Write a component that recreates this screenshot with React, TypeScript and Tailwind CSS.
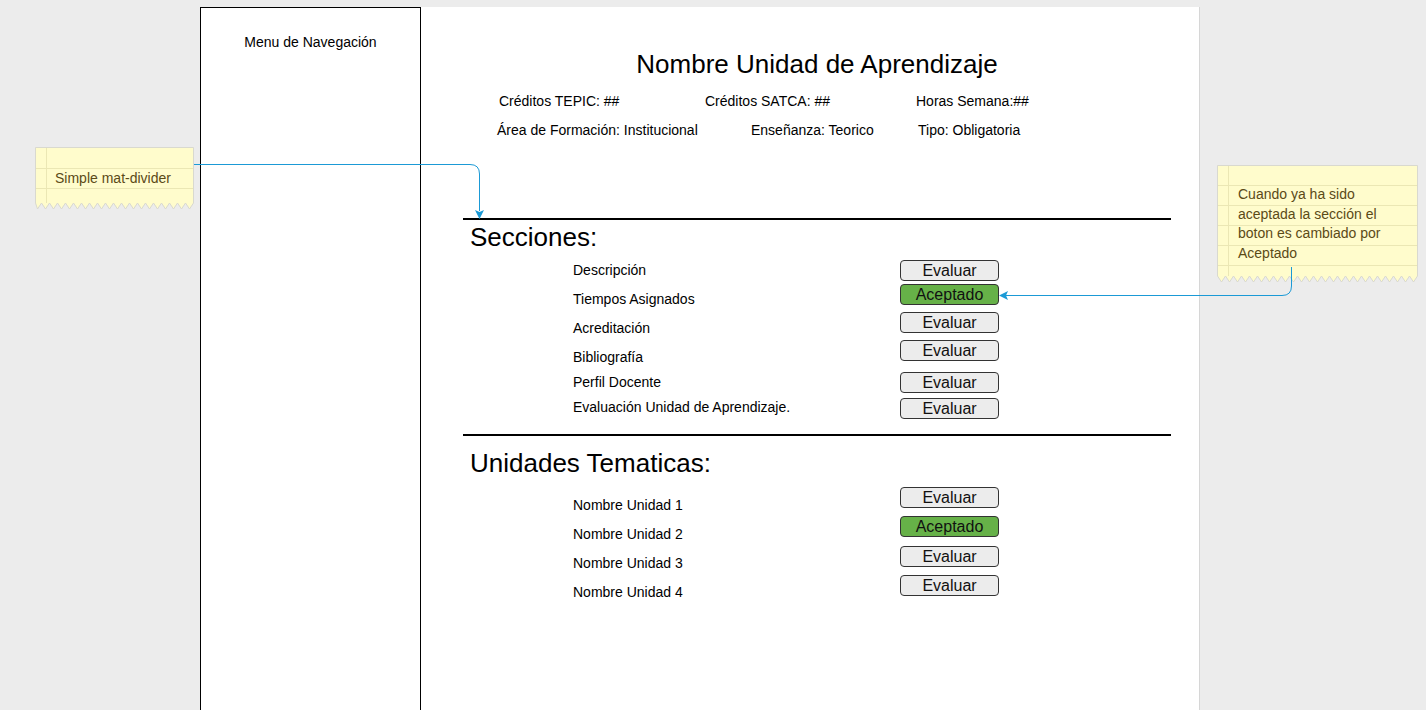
import React from 'react';

type Row = { label: string; accepted?: boolean; labelGap: string; btnGap: string };

const secciones: Row[] = [
    { label: 'Descripción', labelGap: 'mt-[11px]', btnGap: 'mt-[9px]' },
    { label: 'Tiempos Asignados', accepted: true, labelGap: 'mt-[13px]', btnGap: 'mt-[3px]' },
    { label: 'Acreditación', labelGap: 'mt-[13px]', btnGap: 'mt-[7px]' },
    { label: 'Bibliografía', labelGap: 'mt-[13px]', btnGap: 'mt-[7px]' },
    { label: 'Perfil Docente', labelGap: 'mt-[9px]', btnGap: 'mt-[11px]' },
    { label: 'Evaluación Unidad de Aprendizaje.', labelGap: 'mt-[9px]', btnGap: 'mt-[5px]' },
];

const unidades: Row[] = [
    { label: 'Nombre Unidad 1', labelGap: 'mt-[20px]', btnGap: 'mt-[10px]' },
    { label: 'Nombre Unidad 2', accepted: true, labelGap: 'mt-[13px]', btnGap: 'mt-[8px]' },
    { label: 'Nombre Unidad 3', labelGap: 'mt-[13px]', btnGap: 'mt-[9px]' },
    { label: 'Nombre Unidad 4', labelGap: 'mt-[13px]', btnGap: 'mt-[8px]' },
];

// zigzag-bottom sticky note shape (draw.io "note" style)
const NoteShape = ({ w, h, lines }: { w: number; h: number; lines: number[] }) => {
    const base = h - 7;
    let d = `M0.5 0.5 H${w - 0.5} V${base}`;
    let up = true;
    for (let x = w - 0.5; x > 0.5; x -= 4) {
        const nx = Math.max(0.5, x - 4);
        d += ` L${nx} ${up ? h - 1 : base}`;
        up = !up;
    }
    d += ' Z';
    return (
        <svg className="absolute inset-0" width={w} height={h}>
            <path d={d} fill="#fffccc" stroke="#d9d9cf" strokeWidth={1} />
            {lines.map((y) => (
                <line key={y} x1={1} x2={w - 1} y1={y + 0.5} y2={y + 0.5} stroke="#ebe7b4" strokeWidth={1} />
            ))}
            <line x1={11.5} x2={11.5} y1={1} y2={base} stroke="#ebe7b4" strokeWidth={1} />
        </svg>
    );
};

const Btn = ({ accepted, className }: { accepted?: boolean; className: string }) => (
    <div
        className={`h-[21px] w-[99px] rounded-[4px] border border-[#333] text-center text-[16px] leading-[19px] text-[#111] ${
            accepted ? 'bg-[#66b148]' : 'bg-[#ececec]'
        } ${className}`}
    >
        {accepted ? 'Aceptado' : 'Evaluar'}
    </div>
);

const List = ({ rows }: { rows: Row[] }) => (
    <div className="flex items-start pl-[110px]">
        <div className="flex w-[327px] flex-col">
            {rows.map((r) => (
                <div key={r.label} className={`h-[16px] text-[14px] leading-[16px] text-black ${r.labelGap}`}>
                    {r.label}
                </div>
            ))}
        </div>
        <div className="flex flex-col">
            {rows.map((r) => (
                <Btn key={r.label} accepted={r.accepted} className={r.btnGap} />
            ))}
        </div>
    </div>
);

export default function App() {
    return (
        <div
            className="relative h-[710px] w-[1426px] overflow-hidden bg-[#ececec]"
            style={{ fontFamily: '"Liberation Sans", Arial, sans-serif' }}
        >
            {/* page */}
            <div className="ml-[200px] pt-[7px]">
                <div className="flex h-[703px] w-[1000px] border-r border-[#d6d6d6] bg-white">
                    <div className="h-[710px] w-[221px] border border-b-0 border-black pt-[26px] text-center text-[14px] leading-[16px] text-black">
                        Menu de Navegación
                    </div>

                    <div className="flex-1 pt-[43px]">
                        <div className="ml-[42px] w-[708px]">
                            <h1 className="text-center text-[26px] leading-[28px] text-black">
                                Nombre Unidad de Aprendizaje
                            </h1>
                            <div className="mt-[15px] flex h-[16px] pl-[36px] text-[14px] leading-[16px] text-black">
                                <span className="w-[206px]">Créditos TEPIC: ##</span>
                                <span className="w-[211px]">Créditos SATCA: ##</span>
                                <span>Horas Semana:##</span>
                            </div>
                            <div className="mt-[13px] flex h-[16px] pl-[34px] text-[14px] leading-[16px] text-black">
                                <span className="w-[254px]">Área de Formación: Institucional</span>
                                <span className="w-[167px]">Enseñanza: Teorico</span>
                                <span>Tipo: Obligatoria</span>
                            </div>

                            <div className="mt-[80px] h-[2px] bg-black" />
                            <h2 className="mt-[3px] pl-[7px] text-[26px] leading-[28px] text-black">Secciones:</h2>
                            <List rows={secciones} />

                            <div className="mt-[15px] h-[2px] bg-black" />
                            <h2 className="mt-[13px] pl-[7px] text-[26px] leading-[28px] text-black">
                                Unidades Tematicas:
                            </h2>
                            <List rows={unidades} />
                        </div>
                    </div>
                </div>
            </div>

            {/* annotation notes on the canvas */}
            <div className="absolute left-[35px] top-[147px] h-[63px] w-[159px]">
                <NoteShape w={159} h={63} lines={[21, 41]} />
                <div className="relative pl-[20px] pt-[23px] text-[14px] leading-[16px] text-[#5b4a17]">
                    Simple mat-divider
                </div>
            </div>

            <div className="absolute left-[1217px] top-[165px] h-[118px] w-[201px]">
                <NoteShape w={201} h={118} lines={[20, 40, 60, 80, 100]} />
                <div className="relative pl-[21px] pt-[20px] text-[14px] leading-[19.7px] text-[#5b4a17]">
                    Cuando ya ha sido
                    <br />
                    aceptada la sección el
                    <br />
                    boton es cambiado por
                    <br />
                    Aceptado
                </div>
            </div>

            {/* connectors */}
            <svg className="pointer-events-none absolute left-0 top-0" width={1426} height={710}>
                <path d="M194 164.5 H470 Q479.5 164.5 479.5 174 V211" fill="none" stroke="#1b9ad6" strokeWidth={1} />
                <polygon points="479.5,219 475,210 479.5,212 484,210" fill="#1b9ad6" />
                <path d="M1291.5 267 V286 Q1291.5 295.5 1282 295.5 H1006" fill="none" stroke="#1b9ad6" strokeWidth={1} />
                <polygon points="999,295.5 1008,291 1006,295.5 1008,300" fill="#1b9ad6" />
            </svg>
        </div>
    );
}
